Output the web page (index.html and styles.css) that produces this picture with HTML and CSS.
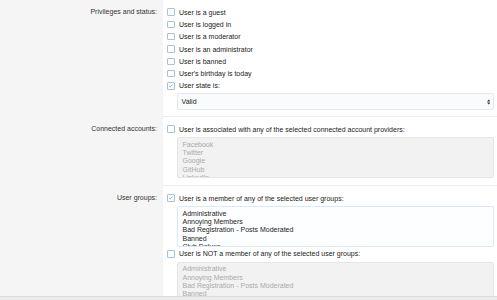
FILE: index.html
```html
<!DOCTYPE html>
<html lang="en">
<head>
  <meta charset="UTF-8">
  <meta name="viewport" content="width=device-width, initial-scale=1">
  <title>User criteria</title>
  <link rel="stylesheet" href="styles.css">
</head>
<body>

<div class="form">

  <!-- Privileges and status -->
  <div class="row">
    <div class="label">Privileges and status:</div>
    <div class="field">
      <div class="check"><span class="box"></span>User is a guest</div>
      <div class="check"><span class="box"></span>User is logged in</div>
      <div class="check"><span class="box"></span>User is a moderator</div>
      <div class="check"><span class="box"></span>User is an administrator</div>
      <div class="check"><span class="box"></span>User is banned</div>
      <div class="check"><span class="box"></span>User's birthday is today</div>
      <div class="check"><span class="box checked"><svg viewBox="0 0 7 7"><path d="M1.3 3.6 L2.9 5.1 L5.8 1.8" /></svg></span>User state is:</div>
      <div class="select">
        <span>Valid</span>
        <svg class="arrows" viewBox="0 0 4 7"><path d="M0 3 L2 0.5 L4 3 Z M0 4 L2 6.5 L4 4 Z" /></svg>
      </div>
    </div>
  </div>

  <!-- Connected accounts -->
  <div class="row">
    <div class="label">Connected accounts:</div>
    <div class="field">
      <div class="check"><span class="box"></span>User is associated with any of the selected connected account providers:</div>
      <div class="listbox disabled">
        <div>Facebook</div>
        <div>Twitter</div>
        <div>Google</div>
        <div>GitHub</div>
        <div>LinkedIn</div>
      </div>
    </div>
  </div>

  <!-- User groups -->
  <div class="row">
    <div class="label">User groups:</div>
    <div class="field">
      <div class="check"><span class="box checked"><svg viewBox="0 0 7 7"><path d="M1.3 3.6 L2.9 5.1 L5.8 1.8" /></svg></span>User is a member of any of the selected user groups:</div>
      <div class="listbox">
        <div>Administrative</div>
        <div>Annoying Members</div>
        <div>Bad Registration - Posts Moderated</div>
        <div>Banned</div>
        <div>Club Deluxe</div>
      </div>
      <div class="check"><span class="box"></span>User is NOT a member of any of the selected user groups:</div>
      <div class="listbox disabled tall">
        <div>Administrative</div>
        <div>Annoying Members</div>
        <div>Bad Registration - Posts Moderated</div>
        <div>Banned</div>
        <div>Club Deluxe</div>
      </div>
    </div>
  </div>

</div>

<div class="bottom-bar"></div>

</body>
</html>
```

FILE: styles.css
```css
body {
  margin: 0;
  font-family: 'Liberation Sans', Arial, sans-serif;
  font-size: 7px;
  color: #222;
  background: #f5f5f5;
  overflow: hidden;
}
.row {
  display: grid;
  grid-template-columns: 163px 1fr;
}
.label {
  text-align: right;
  padding: 6px 6px 0 0;
  line-height: 12.3px;
  color: #333;
}
.field {
  background: #fff;
  padding: 6px 3px 6px 4px;
  border-bottom: 1px solid #ececec;
}
.check {
  display: flex;
  align-items: center;
  height: 12.3px;
  white-space: nowrap;
}
.box {
  width: 5.5px;
  height: 5.5px;
  border: 1px solid #a9c2d8;
  border-radius: 1px;
  margin-right: 4.5px;
  flex-shrink: 0;
  background: #fff;
  display: flex;
}
.box svg {
  width: 100%;
  height: 100%;
}
.box svg path {
  fill: none;
  stroke: #6a9ccb;
  stroke-width: 0.9;
}
.select {
  margin: 1px 0 0 10px;
  height: 15px;
  border: 1px solid #e3e8ed;
  border-radius: 2px;
  background: #f9fbfc;
  display: flex;
  align-items: center;
  justify-content: space-between;
  padding: 0 3px 0 3.5px;
}
.arrows {
  width: 3.5px;
  height: 6px;
}
.arrows path {
  fill: #333;
}
.listbox {
  margin: 2px 0 1px 10px;
  height: 36px;
  overflow: hidden;
  border: 1px solid #dde8f1;
  border-radius: 2px;
  background: #fdfeff;
  padding: 2.5px 4.5px 0;
  line-height: 8.3px;
  color: #222;
}
.listbox.disabled {
  background: #f2f2f2;
  border-color: #e6e6e6;
  color: #aaa;
}
.listbox.tall {
  height: 44px;
}
.bottom-bar {
  position: fixed;
  left: 0;
  right: 0;
  bottom: 0;
  height: 3px;
  background: #ebebeb;
  border-top: 1px solid #dcdcdc;
}
```
